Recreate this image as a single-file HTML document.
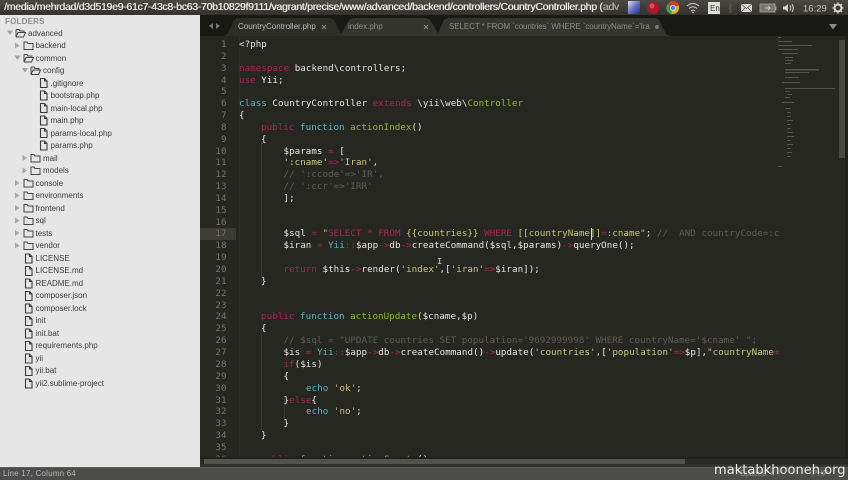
<!DOCTYPE html>
<html>
<head>
<meta charset="utf-8">
<style>
html,body{margin:0;padding:0;width:848px;height:480px;overflow:hidden;background:#272822}
*{box-sizing:border-box}
.abs{position:absolute}
#top{position:absolute;left:0;top:0;width:848px;height:15px;background:linear-gradient(#4a4842,#35332e);color:#e8e6e0;font:normal 10.5px/15px "Liberation Sans",sans-serif;white-space:nowrap;overflow:hidden;text-shadow:.4px 0 0 #e8e6e0}
#top svg{font-weight:normal;text-shadow:none}
#side{position:absolute;left:0;top:15px;width:200px;height:452px;background:#e6e6e6}
.r{position:absolute;margin-top:.5px;font:8px/12px "Liberation Sans",sans-serif;color:#3c3c3c;white-space:nowrap;filter:blur(.3px)}
.ic{position:absolute}
#tabs{position:absolute;left:200px;top:15px;width:648px;height:21px;background:#181815}
.t{position:absolute;font:8px/12px "Liberation Sans",sans-serif;white-space:nowrap;filter:blur(.3px)}
#ed{position:absolute;left:200px;top:36px;width:648px;height:431px;background:#272721;overflow:hidden}
.n{position:absolute;width:26.500px;text-align:right;left:0;margin-top:1px;font:9.2px/12px "DejaVu Sans Mono",monospace;color:#77776c;filter:blur(.25px)}
.l{position:absolute;margin-top:1px;font:9.2px/12px "DejaVu Sans Mono",monospace;letter-spacing:.04px;color:#e6e6da;white-space:pre;filter:blur(.25px)}
.k{color:#a8245a}.f{color:#8fb836}.c{color:#5fb3c4}.s{color:#c9c67c}.m{color:#5e5e52}.o{color:#a8245a}
#status{position:absolute;left:0;top:467px;width:848px;height:13px;background:#4c4c4a;border-top:1px solid #5c5c5a}
</style>
</head>
<body>
<div id="top">
<span class="abs" style="left:4px;top:0;letter-spacing:-.28px">/media/mehrdad/d3d519e9-61c7-43c8-bc63-70b10829f9111/vagrant/precise/www/advanced/backend/controllers/CountryController.php (<span style="color:#8a8880">adv</span></span>
<svg class="abs" style="left:600px;top:0" width="248" height="15" viewBox="0 0 248 15">
<defs><linearGradient id="b" x1="0" y1="0" x2="1" y2="1"><stop offset="0" stop-color="#dfe3f5"/><stop offset=".5" stop-color="#6a70c0"/><stop offset="1" stop-color="#23306f"/></linearGradient></defs>
<rect x="28" y="1" width="12" height="13" fill="url(#b)"/>
<circle cx="53" cy="8" r="6" fill="#a81a2c"/><circle cx="52" cy="6" r="2.5" fill="#e04a5a"/>
<circle cx="73" cy="8" r="6" fill="#d8b030"/><path d="M73 8L68 4A6 6 0 0 1 79 5Z" fill="#cf3a30"/><path d="M73 8L68 4A6 6 0 0 0 71 14Z" fill="#4a9a40"/><circle cx="73" cy="8" r="2.6" fill="#4a80d0" stroke="#eee" stroke-width=".8"/>
<path d="M87 6Q93 1 99 6M89 8.5Q93 5 97 8.5M91 11Q93 9 95 11" fill="none" stroke="#cfcdc8" stroke-width="1"/><circle cx="93" cy="12.5" r=".9" fill="#cfcdc8"/>
<rect x="108" y="2" width="12" height="12" fill="#dcdcd8"/><text x="110" y="11" font-family="Liberation Sans" font-size="8" font-weight="normal" fill="#333">En</text>
<path d="M130 4v9M130 4l2 2-3 3M130 13l2-2-3-3" fill="none" stroke="#5e5c56" stroke-width=".8"/>
<rect x="141" y="4" width="11" height="8" fill="#d8d8d4"/><path d="M141 4l5.500 4.500L152 4M141 12l4-4M152 12l-4-4" fill="none" stroke="#55534e" stroke-width=".8"/>
<rect x="160" y="4" width="15" height="8" fill="#77756f" stroke="#a8a6a0" stroke-width=".8"/><rect x="175" y="6.500" width="1.500" height="3.500" fill="#a8a6a0"/><path d="M165 8h5M168 6l2 2-2 2" stroke="#ddd" fill="none" stroke-width=".8"/>
<path d="M183 6.500h2l3-2.500v8l-3-2.500h-2z" fill="#d5d3ce"/><path d="M190 5.500Q191.500 8 190 10.500M192 4Q194.500 8 192 12" fill="none" stroke="#d5d3ce" stroke-width="1"/>
<text x="203" y="11.500" font-family="Liberation Sans" font-size="9.500" font-weight="normal" fill="#c8c6c0">16:29</text>
<circle cx="238" cy="8" r="3.500" fill="none" stroke="#d8d6d0" stroke-width="2"/><path d="M238 2.500v2M238 11.500v2M232.500 8h2M241.500 8h2M234 4l1.500 1.500M240.500 10.500L242 12M234 12l1.500-1.500M240.500 5.500L242 4" stroke="#d8d6d0" stroke-width="1.300"/>
</svg>
</div>

<div id="side">
<div class="r" style="left:5px;top:0;color:#8d8d8d;font-weight:bold;letter-spacing:.2px">FOLDERS</div>
</div>
<svg class="abs" style="left:0;top:15px" width="200" height="452" viewBox="0 15 200 452">
<defs>
<g id="fo"><path d="M0 1h3l1 1.500h5v6H0z" fill="none" stroke="#454545" stroke-width="1"/></g>
<g id="fp"><path d="M0 1h3l1 1.500h4v1.500M0 8.500V1M0 8.500h7.500L9.500 4H2L0 8.500" fill="none" stroke="#454545" stroke-width="1"/></g>
<g id="fi"><path d="M.5 .5h4l2.500 2.500v6.500H.5zM4.500 .5v2.500H7" fill="none" stroke="#3a3a3a" stroke-width="1.100"/></g>
<g id="ar"><path d="M0 0l4.500 3L0 6z" fill="#a8a8a8"/></g>
<g id="ad"><path d="M0 0h6l-3 4.500z" fill="#a0a0a0"/></g>
</defs>
<use href="#ad" x="7" y="30.500"/><use href="#fp" x="16" y="28.500"/>
<use href="#ar" x="15" y="42.500"/><use href="#fo" x="24" y="41"/>
<use href="#ad" x="14.500" y="55.500"/><use href="#fp" x="24" y="53.500"/>
<use href="#ad" x="22" y="68"/><use href="#fp" x="31" y="66"/>
<use href="#fi" x="40" y="78"/><use href="#fi" x="40" y="90.500"/><use href="#fi" x="40" y="103"/><use href="#fi" x="40" y="115.500"/><use href="#fi" x="40" y="128"/><use href="#fi" x="40" y="140.500"/>
<use href="#ar" x="22.500" y="155"/><use href="#fo" x="31" y="153.500"/>
<use href="#ar" x="22.500" y="167.500"/><use href="#fo" x="31" y="166"/>
<use href="#ar" x="15" y="180"/><use href="#fo" x="24" y="178.500"/>
<use href="#ar" x="15" y="192.500"/><use href="#fo" x="24" y="191"/>
<use href="#ar" x="15" y="205"/><use href="#fo" x="24" y="203.500"/>
<use href="#ar" x="15" y="217.500"/><use href="#fo" x="24" y="216"/>
<use href="#ar" x="15" y="230"/><use href="#fo" x="24" y="228.500"/>
<use href="#ar" x="15" y="242.500"/><use href="#fo" x="24" y="241"/>
<use href="#fi" x="25" y="253.500"/><use href="#fi" x="25" y="266"/><use href="#fi" x="25" y="278.500"/><use href="#fi" x="25" y="291"/><use href="#fi" x="25" y="303.500"/><use href="#fi" x="25" y="316"/><use href="#fi" x="25" y="328.500"/><use href="#fi" x="25" y="341"/><use href="#fi" x="25" y="353.500"/><use href="#fi" x="25" y="366"/><use href="#fi" x="25" y="378.500"/>
</svg>
<div class="r" style="left:28px;top:27px">advanced</div>
<div class="r" style="left:35.500px;top:39.500px">backend</div>
<div class="r" style="left:35.500px;top:52px">common</div>
<div class="r" style="left:43px;top:64.500px">config</div>
<div class="r" style="left:50.500px;top:77px">.gitignore</div>
<div class="r" style="left:50.500px;top:89.500px">bootstrap.php</div>
<div class="r" style="left:50.500px;top:102px">main-local.php</div>
<div class="r" style="left:50.500px;top:114.500px">main.php</div>
<div class="r" style="left:50.500px;top:127px">params-local.php</div>
<div class="r" style="left:50.500px;top:139.500px">params.php</div>
<div class="r" style="left:43px;top:152px">mail</div>
<div class="r" style="left:43px;top:164.500px">models</div>
<div class="r" style="left:35.500px;top:177px">console</div>
<div class="r" style="left:35.500px;top:189.500px">environments</div>
<div class="r" style="left:35.500px;top:202px">frontend</div>
<div class="r" style="left:35.500px;top:214.500px">sql</div>
<div class="r" style="left:35.500px;top:227px">tests</div>
<div class="r" style="left:35.500px;top:239.500px">vendor</div>
<div class="r" style="left:35.500px;top:252px">LICENSE</div>
<div class="r" style="left:35.500px;top:264.500px">LICENSE.md</div>
<div class="r" style="left:35.500px;top:277px">README.md</div>
<div class="r" style="left:35.500px;top:289.500px">composer.json</div>
<div class="r" style="left:35.500px;top:302px">composer.lock</div>
<div class="r" style="left:35.500px;top:314.500px">init</div>
<div class="r" style="left:35.500px;top:327px">init.bat</div>
<div class="r" style="left:35.500px;top:339.500px">requirements.php</div>
<div class="r" style="left:35.500px;top:352px">yii</div>
<div class="r" style="left:35.500px;top:364px">yii.bat</div>
<div class="r" style="left:35.500px;top:377px">yii2.sublime-project</div>

<div id="tabs">
<svg class="abs" style="left:0;top:0" width="648" height="21" viewBox="200 15 648 21">
<path d="M213 23v6l-4-3zM216 23v6l4-3z" fill="#77776f"/>
<path d="M445 36Q438 36 436 30L431 21Q429 18 425 18H355Q350 18 348 22L343 31Q341 36 336 36z" fill="#353530"/>
<path d="M671 36Q666 36 664 30L660 22Q658 18 654 18H450Q445 18 443 22L439 31Q437 36 431 36z" fill="#353530"/>
<path d="M347 36Q341 36 339 30L335 22Q333 18 329 18H240Q235 18 233 22L229 31Q227 36 221 36z" fill="#2e2e29"/>
<path d="M322 25l4 4M326 25l-4 4M424 25l4 4M428 25l-4 4" stroke="#8c8c84" stroke-width=".9"/>
<circle cx="657" cy="27" r="2" fill="#77776f"/>
<path d="M829 24h8l-4 5.500z" fill="#8a8a82"/>
</svg>
<div class="t" style="left:38px;top:6px;color:#bdbdb5">CountryController.php</div>
<div class="t" style="left:148px;top:6px;color:#8d8d85">index.php</div>
<div class="t" style="left:249px;top:6px;color:#8d8d85;letter-spacing:-.08px">SELECT * FROM `countries` WHERE `countryName`='Ira</div>
</div>

<div id="ed">
<div class="abs" style="left:0;top:192px;width:36px;height:12px;background:#3c3c34"></div>
<div class="abs" style="left:39px;top:0;width:1px;height:420px;background:#2f2f29"></div>
<div class="abs" style="left:61px;top:107px;width:1px;height:134px;background:#3c3c35"></div>
<div class="abs" style="left:61px;top:298px;width:1px;height:96px;background:#3c3c35"></div>
<div class="abs" style="left:84px;top:361px;width:1px;height:24px;background:#3c3c35"></div>
<div class="abs" style="left:390.500px;top:192px;width:1px;height:12px;background:#ddd"></div>
<div class="abs" style="left:237px;top:222px;color:#ccc;font:9px/9px 'Liberation Mono',monospace">I</div>

<div class="n" style="top:2px">1</div><div class="l" style="left:39px;top:2px">&lt;?php</div>
<div class="n" style="top:14px">2</div>
<div class="n" style="top:25.500px">3</div><div class="l" style="left:39px;top:25.500px"><span class="k">namespace</span> backend\controllers;</div>
<div class="n" style="top:37.500px">4</div><div class="l" style="left:39px;top:37.500px"><span class="k">use</span> Yii;</div>
<div class="n" style="top:49px">5</div>
<div class="n" style="top:61px">6</div><div class="l" style="left:39px;top:61px"><span class="c">class</span> CountryController <span class="k">extends</span> \yii\web\<span class="f">Controller</span></div>
<div class="n" style="top:73px">7</div><div class="l" style="left:39px;top:73px">{</div>
<div class="n" style="top:85px">8</div><div class="l" style="left:61px;top:85px"><span class="k">public</span> <span class="c">function</span> <span class="f">actionIndex</span>()</div>
<div class="n" style="top:96.500px">9</div><div class="l" style="left:61px;top:96.500px">{</div>
<div class="n" style="top:108.500px">10</div><div class="l" style="left:83.500px;top:108.500px">$params <span class="o">=</span> [</div>
<div class="n" style="top:120px">11</div><div class="l" style="left:83.500px;top:120px"><span class="s">':cname'</span><span class="o">=&gt;</span><span class="s">'Iran'</span>,</div>
<div class="n" style="top:132px">12</div><div class="l m" style="left:83.500px;top:132px">// ':ccode'=&gt;'IR',</div>
<div class="n" style="top:144px">13</div><div class="l m" style="left:83.500px;top:144px">// ':ccr'=&gt;'IRR'</div>
<div class="n" style="top:156px">14</div><div class="l" style="left:83.500px;top:156px">];</div>
<div class="n" style="top:167.500px">15</div>
<div class="n" style="top:179.500px">16</div>
<div class="n" style="top:191px">17</div><div class="l" style="left:83.500px;top:191px">$sql <span class="o">=</span> <span class="s">"</span><span class="k">SELECT * FROM</span> <span class="s">{{countries}}</span> <span class="k">WHERE</span> <span class="s">[[countryName]]</span><span class="o">=</span><span class="s">:cname"</span>; <span class="m">//  AND countryCode=:c</span></div>
<div class="n" style="top:203px">18</div><div class="l" style="left:83.500px;top:203px">$iran <span class="o">=</span> <span class="c">Yii</span><span class="o">::</span>$app<span class="o">-&gt;</span>db<span class="o">-&gt;</span>createCommand($sql,$params)<span class="o">-&gt;</span>queryOne();</div>
<div class="n" style="top:215px">19</div>
<div class="n" style="top:227px">20</div><div class="l" style="left:83.500px;top:227px"><span class="k">return</span> $this<span class="o">-&gt;</span>render(<span class="s">'index'</span>,[<span class="s">'iran'</span><span class="o">=&gt;</span>$iran]);</div>
<div class="n" style="top:239px">21</div><div class="l" style="left:61px;top:239px">}</div>
<div class="n" style="top:250.500px">22</div>
<div class="n" style="top:262.500px">23</div>
<div class="n" style="top:274px">24</div><div class="l" style="left:61px;top:274px"><span class="k">public</span> <span class="c">function</span> <span class="f">actionUpdate</span>($cname,$p)</div>
<div class="n" style="top:286px">25</div><div class="l" style="left:61px;top:286px">{</div>
<div class="n" style="top:298px">26</div><div class="l m" style="left:83.500px;top:298px">// $sql = "UPDATE countries SET population='9692999998' WHERE countryName='$cname' ";</div>
<div class="n" style="top:310px">27</div><div class="l" style="left:83.500px;top:310px">$is <span class="o">=</span> <span class="c">Yii</span><span class="o">::</span>$app<span class="o">-&gt;</span>db<span class="o">-&gt;</span>createCommand()<span class="o">-&gt;</span>update(<span class="s">'countries'</span>,[<span class="s">'population'</span><span class="o">=&gt;</span>$p],<span class="s">"countryName</span><span class="o">=</span></div>
<div class="n" style="top:321.500px">28</div><div class="l" style="left:83.500px;top:321.500px"><span class="k">if</span>($is)</div>
<div class="n" style="top:333.500px">29</div><div class="l" style="left:83.500px;top:333.500px">{</div>
<div class="n" style="top:345.500px">30</div><div class="l" style="left:106px;top:345.500px"><span class="c">echo</span> <span class="s">'ok'</span>;</div>
<div class="n" style="top:357.500px">31</div><div class="l" style="left:83.500px;top:357.500px">}<span class="k">else</span>{</div>
<div class="n" style="top:369px">32</div><div class="l" style="left:106px;top:369px"><span class="c">echo</span> <span class="s">'no'</span>;</div>
<div class="n" style="top:381px">33</div><div class="l" style="left:83.500px;top:381px">}</div>
<div class="n" style="top:393px">34</div><div class="l" style="left:61px;top:393px">}</div>
<div class="n" style="top:405px">35</div>
<div class="n" style="top:416.500px">36</div><div class="l" style="left:61px;top:416.500px"><span class="k">public</span> <span class="c">function</span> <span class="f">actionCreate</span>()</div>

<svg class="abs" style="left:575px;top:0" width="60" height="135" viewBox="0 0 60 135">
<g fill="#56564b">
<rect x="3" y="1" width="3" height="1"/><rect x="3" y="5" width="14" height="1"/><rect x="3" y="9" width="34" height="1"/><rect x="3" y="13" width="20" height="1"/><rect x="7" y="17" width="16" height="1"/>
<rect x="10" y="21" width="8" height="1"/><rect x="10" y="24" width="8" height="1"/><rect x="10" y="27" width="6" height="1"/><rect x="10" y="33" width="34" height="1.500"/><rect x="10" y="36" width="24" height="1"/><rect x="10" y="41" width="14" height="1"/>
<rect x="7" y="46" width="18" height="1"/><rect x="10" y="52" width="50" height="1"/><rect x="10" y="55" width="5" height="1"/><rect x="12" y="58" width="5" height="1"/><rect x="10" y="61" width="5" height="1"/><rect x="7" y="66" width="12" height="1"/>
<rect x="10" y="72" width="6" height="1"/><rect x="12" y="76" width="4" height="1"/><rect x="12" y="80" width="4" height="1"/><rect x="12" y="84" width="6" height="1"/><rect x="12" y="88" width="4" height="1"/><rect x="12" y="92" width="4" height="1"/><rect x="12" y="96" width="6" height="1"/><rect x="12" y="100" width="7" height="1"/><rect x="12" y="104" width="4" height="1"/><rect x="12" y="108" width="6" height="1"/><rect x="12" y="112" width="4" height="1"/><rect x="12" y="116" width="5" height="1"/><rect x="12" y="120" width="4" height="1"/><rect x="3" y="130" width="4" height="1"/>
</g>
</svg>
<div class="abs" style="left:639px;top:4px;width:6px;height:118px;background:#4a4a45"></div>
<div class="abs" style="left:645px;top:0;width:3px;height:431px;background:#1f1f1b"></div>
<div class="abs" style="left:0;top:421px;width:648px;height:2px;background:#1f1f1b"></div>
<div class="abs" style="left:0;top:423px;width:648px;height:5px;background:#2a2a26"></div>
<div class="abs" style="left:4px;top:423px;width:481px;height:5px;background:#52524e"></div>
<div class="abs" style="left:0;top:428px;width:648px;height:3px;background:#32322e"></div>
</div>

<div id="status"></div>
<div class="abs" style="left:3px;top:467px;font:7.800px/13px 'Liberation Sans',sans-serif;color:#b8b8b4;letter-spacing:.3px;filter:blur(.25px)">Line 17, Column 64</div>
<div class="abs" style="left:740px;top:467px;font:7.800px/13px 'Liberation Sans',sans-serif;color:#8f8f8c;white-space:nowrap">Spaces: 4</div>
<div class="abs" style="left:812px;top:467px;font:7.800px/13px 'Liberation Sans',sans-serif;color:#8f8f8c">PHP</div>
<div class="abs" style="left:714px;top:462px;font:13px/18px 'DejaVu Sans',sans-serif;color:#f0f0f0;white-space:nowrap;letter-spacing:.03px">maktabkhooneh.org</div>
</body>
</html>
